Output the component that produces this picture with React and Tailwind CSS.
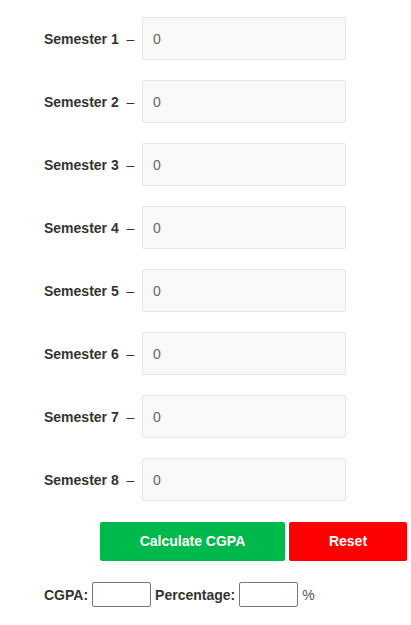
export default function App() {
  const sems = [1, 2, 3, 4, 5, 6, 7, 8];
  return (
    <div className="w-[411px] h-[625px] bg-white text-[#333] font-['Liberation_Sans',Arial,sans-serif] text-[14px] pt-[17px]">
      <div className="flex flex-col gap-[20px]">
        {sems.map((n) => (
          <div key={n} className="flex items-center">
            <label className="w-[142px] pl-[44px] pt-[2px] font-bold whitespace-pre">
              Semester {n}  <span className="font-normal">–</span>
            </label>
            <input
              type="text"
              defaultValue="0"
              className="w-[204px] h-[43px] bg-[#f9f9f9] border border-[#e6e6e6] rounded-[2px] px-[10px] text-[#666] text-[14px] outline-none"
            />
          </div>
        ))}
      </div>
      <div className="flex gap-[4px] pl-[100px] mt-[21px]">
        <button className="w-[185px] h-[39px] bg-[#00b94c] text-white font-bold rounded-[2px] text-[14px]">
          Calculate CGPA
        </button>
        <button className="w-[118px] h-[39px] bg-[#ff0000] text-white font-bold rounded-[2px] text-[14px]">
          Reset
        </button>
      </div>
      <div className="flex items-center pl-[44px] mt-[21px]">
        <span className="font-bold pt-[2px]">CGPA:</span>
        <input type="text" className="ml-[4px] w-[59px] h-[25px] border border-[#777] rounded-[2px] outline-none" />
        <span className="font-bold ml-[4px] pt-[2px]">Percentage:</span>
        <input type="text" className="ml-[4px] w-[59px] h-[25px] border border-[#777] rounded-[2px] outline-none" />
        <span className="ml-[4px] text-[#555] pt-[2px]">%</span>
      </div>
    </div>
  );
}
